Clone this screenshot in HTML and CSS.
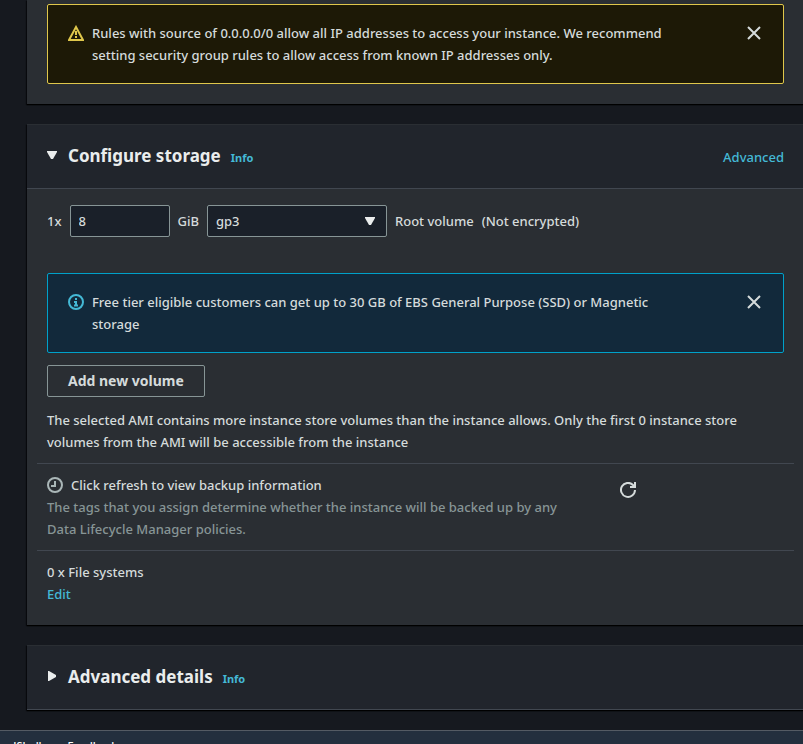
FILE: index.html
```html
<!DOCTYPE html>
<html lang="en">
<head>
<meta charset="utf-8">
<title>Launch an instance</title>
<link rel="stylesheet" href="styles.css">
</head>
<body>
<main class="page">
  <section class="card card-clipped">
    <div class="alert alert-warning" role="status">
      <svg class="icon" viewBox="0 0 16 16" aria-hidden="true"><path class="line" d="M8 2 15 15H1Z"/><path class="line" d="M8 6v4M8 11v2"/></svg>
      <p class="alert-text">Rules with source of 0.0.0.0/0 allow all IP addresses to access your instance. We recommend setting security group rules to allow access from known IP addresses only.</p>
      <button class="icon-button" type="button" aria-label="Dismiss warning"><svg class="icon" viewBox="0 0 16 16" aria-hidden="true"><path class="line" d="m2 2 12 12M14 2 2 14"/></svg></button>
    </div>
  </section>

  <section class="card">
    <header class="card-header">
      <button class="toggle" type="button" aria-expanded="true" aria-label="Collapse Configure storage"><svg class="caret" viewBox="0 0 10 10" aria-hidden="true"><path d="M0 1h10v1L6 9H4L0 2Z"/></svg></button>
      <h2 class="title">Configure storage</h2>
      <a class="info" href="#storage-info">Info</a>
      <a class="link header-action" href="#advanced">Advanced</a>
    </header>
    <div class="card-body">
      <div class="volume">
        <label for="size">1x</label>
        <input class="field size" id="size" type="text" value="8">
        <label for="type">GiB</label>
        <div class="select-wrap">
          <select class="field type" id="type"><option>gp3</option></select>
          <svg class="caret select-caret" viewBox="0 0 10 10" aria-hidden="true"><path d="M0 1h10v1L6 9H4L0 2Z"/></svg>
        </div>
        <span>Root volume</span>
        <span>(Not encrypted)</span>
      </div>
      <div class="alert alert-info" role="status">
        <svg class="icon" viewBox="0 0 16 16" aria-hidden="true"><circle class="line" cx="8" cy="8" r="7"/><path class="line" d="M8 4v2M6 8h2v3M6 11.500h4"/></svg>
        <p class="alert-text">Free tier eligible customers can get up to 30 GB of EBS General Purpose (SSD) or Magnetic storage</p>
        <button class="icon-button" type="button" aria-label="Dismiss notice"><svg class="icon" viewBox="0 0 16 16" aria-hidden="true"><path class="line" d="m2 2 12 12M14 2 2 14"/></svg></button>
      </div>
      <button class="button" type="button">Add new volume</button>
      <p class="note">The selected AMI contains more instance store volumes than the instance allows. Only the first 0 instance store volumes from the AMI will be accessible from the instance</p>
      <div class="backup">
        <div class="backup-copy">
          <p class="backup-title"><svg class="icon muted" viewBox="0 0 16 16" aria-hidden="true"><circle class="line" cx="8" cy="8" r="7"/><path class="line" d="M8 4v5H4"/></svg>Click refresh to view backup information</p>
          <p class="muted">The tags that you assign determine whether the instance will be backed up by any Data Lifecycle Manager policies.</p>
        </div>
        <button class="icon-button refresh" type="button" aria-label="Refresh"><svg class="icon" viewBox="0 0 16 16" aria-hidden="true"><path class="line" d="M15 8A7 7 0 1 1 13 3l2 2M15 0v5h-5"/></svg></button>
      </div>
      <div class="files">
        <p>0 x File systems</p>
        <a class="link" href="#edit">Edit</a>
      </div>
    </div>
  </section>

  <section class="card">
    <header class="card-header">
      <button class="toggle" type="button" aria-expanded="false" aria-label="Expand Advanced details"><svg class="caret" viewBox="0 0 10 10" aria-hidden="true"><path d="M1 0v10h1l7-4V4L2 0Z"/></svg></button>
      <h2 class="title">Advanced details</h2>
      <a class="info" href="#details-info">Info</a>
    </header>
  </section>
</main>
<footer class="footer">
  <a href="#cloudshell">CloudShell</a>
  <a href="#feedback">Feedback</a>
</footer>
</body>
</html>
```
FILE: styles.css
```css
* { box-sizing: border-box; }
html { height: 100%; overflow: hidden; }
body {
  height: 100%;
  margin: 0;
  display: flex;
  flex-direction: column;
  overflow: hidden;
  background: #16191f;
  color: #d5dbdb;
  font: 500 13px/22px "Noto Sans", sans-serif;
}
p, h2 { margin: 0; }
a { text-decoration: none; }
button { font: inherit; color: inherit; cursor: pointer; }
.page {
  flex: 1;
  min-height: 0;
  overflow: hidden;
  display: flex;
  flex-direction: column;
  gap: 20px;
  padding-left: 27px;
}
.card {
  flex: none;
  background: #2a2e33;
  border-top: 1px solid #2a2e33;
  box-shadow: 0 1px 1px #000, -1px 1px 1px #0a0c10;
}
.card-clipped { padding: 3px 19px 20px 20px; }
.card-header {
  display: flex;
  align-items: baseline;
  padding: 20px 19px 21px 20px;
  background: #21252c;
  border-bottom: 1px solid #414750;
}
.card-body { padding: 16px 19px 20px 20px; }
.toggle {
  align-self: flex-start;
  width: 10px;
  margin: 5px 11px 0 0;
  padding: 0;
  border: 0;
  background: none;
}
.caret { display: block; width: 10px; height: 10px; fill: #eaeded; }
.title { color: #eaeded; font-size: 17px; line-height: 22px; font-weight: 700; }
.info { margin-left: 10px; color: #44b9d6; font-size: 11px; line-height: 16px; font-weight: 700; }
.link { color: #44b9d6; }
.header-action { margin-left: auto; line-height: 20px; }
.icon {
  flex: none;
  display: block;
  width: 16px;
  height: 16px;
}
.line { fill: none; stroke: currentColor; stroke-width: 2; }
.icon-button { padding: 0; border: 0; background: none; }
.alert {
  display: flex;
  gap: 8px;
  padding: 17px 21px 17px 20px;
  border: 1px solid;
  border-radius: 2px;
}
.alert > .icon, .alert > .icon-button { margin-top: 3px; align-self: flex-start; }
.alert-text { flex: 1; padding-right: 60px; color: #d5dbdb; }
.alert .icon-button { color: #d5dbdb; }
.alert-warning { background: #1d1906; border-color: #dfc74b; color: #dfc74b; }
.alert-info { background: #12293b; border-color: #00a1c9; color: #44b9d6; }
.volume { display: flex; align-items: center; gap: 8px; margin-bottom: 36px; }
.field {
  height: 32px;
  padding: 0 8px;
  border: 1px solid #879596;
  border-radius: 2px;
  background: #1a2029;
  color: #d5dbdb;
  font: inherit;
}
.size { width: 100px; }
.type { width: 180px; appearance: none; }
.select-wrap { position: relative; }
.select-caret { position: absolute; right: 12px; top: 11px; }
.button {
  display: block;
  height: 32px;
  margin: 12px 0;
  padding: 0 20px;
  border: 1px solid #879596;
  border-radius: 2px;
  background: transparent;
  font-size: 14px;
  line-height: 22px;
  font-weight: 700;
}
.backup, .files {
  margin: 0 -10px;
  padding: 10px;
  border-top: 1px solid #414750;
}
.note { margin-bottom: 10px; padding-right: 20px; }
.backup { display: grid; grid-template-columns: 7fr 2fr; }
.backup-copy { padding-right: 40px; }
.backup-title { display: flex; align-items: center; gap: 8px; }
.muted { color: #879596; }
.icon.muted { color: #aab7b8; }
.refresh { align-self: start; justify-self: start; margin-top: 8px; }
.files { padding-bottom: 0; }
.footer {
  flex: none;
  display: flex;
  gap: 26px;
  height: 14px;
  padding: 4px 0 0;
  border-top: 1px solid #545b64;
  background: #232f3e;
  font-size: 11px;
}
.footer a { color: #fff; }
.footer a:first-child { margin-left: -14px; }
```
